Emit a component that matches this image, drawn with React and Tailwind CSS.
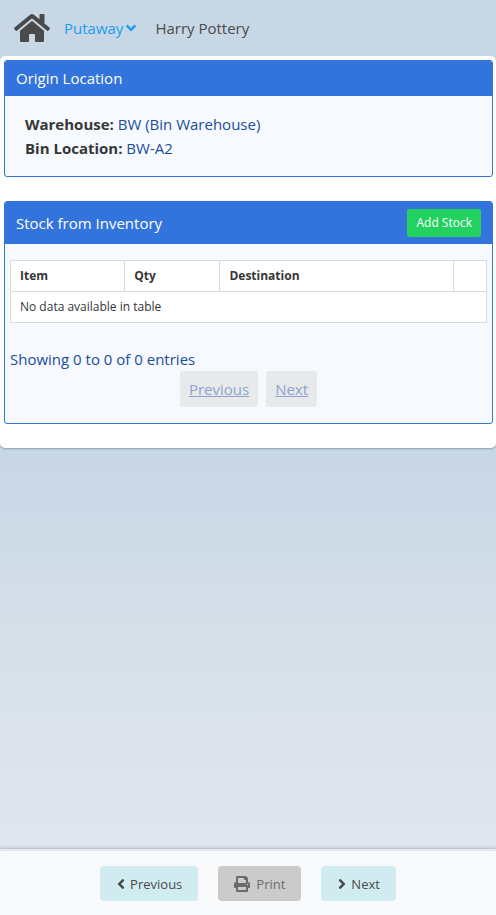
import React from "react";
import { FaHome, FaAngleDown, FaAngleLeft, FaAngleRight, FaPrint } from "react-icons/fa";

function Panel({ title, action, children }) {
  return (
    <section className="overflow-hidden rounded-[3px] border border-[#3273dc] bg-[#f6f9fe]">
      <header className="flex items-center justify-between bg-[#3273dc] px-[11px] text-white">
        <h2 className="py-1.5 leading-[23px]">{title}</h2>
        {action}
      </header>
      {children}
    </section>
  );
}

function PageButton({ label }) {
  return (
    <button
      type="button"
      disabled
      className="h-9 rounded-[3px] bg-[#e8e9ea] px-[9px] text-[#8ea4cf] underline"
    >
      {label}
    </button>
  );
}

function ActionButton({ icon, label, disabled }) {
  return (
    <button
      type="button"
      disabled={disabled}
      className="flex h-[35px] items-center gap-1 rounded bg-[#d1ecf0] px-4 text-[13px] text-[#4a4a4a] disabled:bg-[#cbcbcb] disabled:text-[#6b6b6b]"
    >
      {icon}
      {label}
    </button>
  );
}

export default function App() {
  return (
    <div className="flex min-h-screen flex-col bg-[#c8d7e6] font-['Open_Sans','Noto_Sans',sans-serif] text-[15px] leading-6 text-[#4a4a4a]">
      <nav className="flex h-14 shrink-0 items-center pl-3.5">
        <a href="#home" aria-label="Home">
          <FaHome className="h-8 w-9" />
        </a>
        <a href="#putaway" className="ml-3.5 flex items-center gap-0.5 text-[#209cee]">
          Putaway
          <FaAngleDown className="h-4 w-3" />
        </a>
        <span className="ml-[18px]">Harry Pottery</span>
      </nav>

      <main className="flex grow flex-col bg-linear-to-b from-[#c8d7e6] from-50% via-[#d6e0e9] via-75% to-[#e2e6ee]">
        <div className="flex flex-col gap-6 rounded-[5px] bg-white pt-1 pr-[3px] pb-6 pl-1 shadow-[0_1px_2px_rgba(10,30,50,0.3)]">
          <Panel title="Origin Location">
            <div className="px-5 py-4 text-[#204d9c]">
              <p>
                <strong className="text-[#363636]">Warehouse:</strong> BW (Bin Warehouse)
              </p>
              <p>
                <strong className="text-[#363636]">Bin Location:</strong> BW-A2
              </p>
            </div>
          </Panel>

          <Panel
            title="Stock from Inventory"
            action={
              <button type="button" className="my-[7px] h-7 rounded-xs bg-[#23d160] px-[9px] text-[12px] text-white">
                Add Stock
              </button>
            }
          >
            <div className="px-[5px] py-4 text-[#204d9c]">
              <table className="w-full table-fixed border-collapse border border-[#dbdbdb] bg-white text-left text-[12px] leading-[18px] text-[#363636]">
                <thead>
                  <tr>
                    <th className="w-[24%] border border-[#dbdbdb] px-[9px] py-1.5">Item</th>
                    <th className="w-[20%] border border-[#dbdbdb] px-[9px] py-1.5">Qty</th>
                    <th className="w-[49%] border border-[#dbdbdb] px-[9px] py-1.5">Destination</th>
                    <th className="border border-[#dbdbdb]" aria-label="Actions"></th>
                  </tr>
                </thead>
                <tbody>
                  <tr>
                    <td colSpan={4} className="border border-[#dbdbdb] px-[9px] py-1.5">
                      No data available in table
                    </td>
                  </tr>
                </tbody>
              </table>
              <p className="mt-6">Showing 0 to 0 of 0 entries</p>
              <div className="flex justify-center gap-2">
                <PageButton label="Previous" />
                <PageButton label="Next" />
              </div>
            </div>
          </Panel>
        </div>
      </main>

      <footer className="sticky bottom-0 flex justify-center gap-5 border-t-2 border-[#e6eaed] bg-[#f8f9fb] pt-[15px] pb-3.5 shadow-[0_-1px_3px_rgba(10,30,50,0.25)]">
        <ActionButton icon={<FaAngleLeft className="h-4 w-2.5" />} label="Previous" />
        <ActionButton icon={<FaPrint className="mr-0.5 size-4" />} label="Print" disabled />
        <ActionButton icon={<FaAngleRight className="h-4 w-2.5" />} label="Next" />
      </footer>
    </div>
  );
}
